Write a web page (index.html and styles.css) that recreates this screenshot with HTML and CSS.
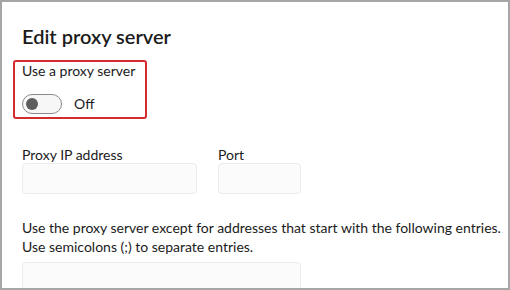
FILE: index.html
```html
<!DOCTYPE html>
<html lang="en">
<head>
  <meta charset="UTF-8" />
  <title>Edit proxy server</title>
  <link rel="stylesheet" href="styles.css">
</head>
<body>

<div class="frame">
  <h1 class="title">Edit proxy server</h1>

  <div class="highlight">
    <div class="label">Use a proxy server</div>
    <div class="toggle-row">
      <span class="toggle"><span class="knob"></span></span>
      <span class="state">Off</span>
    </div>
  </div>

  <div class="fields">
    <div class="field">
      <div class="field-label">Proxy IP address</div>
      <div class="input ip"></div>
    </div>
    <div class="field">
      <div class="field-label">Port</div>
      <div class="input port"></div>
    </div>
  </div>

  <p class="note">Use the proxy server except for addresses that start with the following entries.<br>Use semicolons (;) to separate entries.</p>

  <div class="input exceptions"></div>
</div>

</body>
</html>
```

FILE: styles.css
```css
* {
  box-sizing: border-box;
}
body {
  margin: 0;
  font-family: Lato, "Noto Sans", sans-serif;
  color: #1b1b1b;
  background: #fff;
}
.frame {
  width: 510px;
  height: 290px;
  border: 2px solid #a6a6a6;
  padding: 20px 0 0 20px;
  overflow: hidden;
  background: #fff;
  white-space: nowrap;
}
.title {
  margin: 0;
  font-size: 20px;
  font-weight: 600;
  line-height: 28px;
}
.highlight {
  width: 134px;
  margin: 10px 0 0 -9px;
  padding: 0 7px 3px 7px;
  border: 2px solid #d42b2f;
  border-radius: 3px;
}
.label {
  font-size: 14px;
  line-height: 18px;
}
.toggle-row {
  display: flex;
  align-items: center;
  gap: 12px;
  margin-top: 14px;
  font-size: 14px;
  line-height: 20px;
}
.toggle {
  display: flex;
  align-items: center;
  width: 40px;
  height: 20px;
  border: 1px solid #8a8a8a;
  border-radius: 10px;
  background: #f7f7f7;
  padding-left: 3px;
}
.knob {
  width: 12px;
  height: 12px;
  border-radius: 50%;
  background: #5d5d5d;
}
.fields {
  display: flex;
  gap: 21px;
  margin-top: 27px;
}
.field-label {
  font-size: 14px;
  line-height: 17px;
}
.input {
  height: 31px;
  background: #fbfbfb;
  border: 1px solid #ebebeb;
  border-radius: 4px;
}
.ip {
  width: 175px;
}
.port {
  width: 83px;
}
.note {
  margin: 24px 0 0;
  font-size: 14px;
  line-height: 19px;
}
.exceptions {
  width: 279px;
  margin-top: 6px;
  height: 40px;
}
```
